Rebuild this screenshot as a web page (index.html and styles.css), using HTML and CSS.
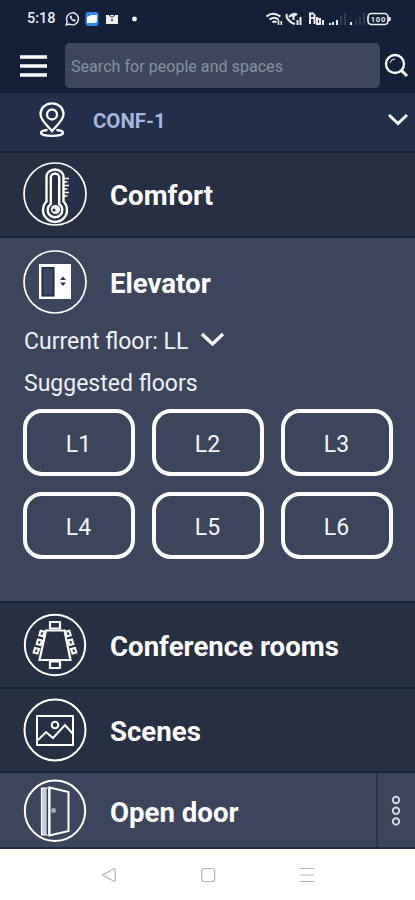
FILE: index.html
```html
<!DOCTYPE html>
<html lang="en">
<head>
<meta charset="utf-8">
<title>Building controls</title>
<link rel="stylesheet" href="styles.css">
</head>
<body>
<div class="phone">
  <header class="status">
    <span class="time">5:18</span>
    <svg class="status-left" width="76" height="16" viewBox="0 0 76 16">
      <path d="M1.200 14l1-3.400A6 6 0 1 1 4.500 13z" fill="none" stroke="#eee" stroke-width="1.400"/>
      <path d="M5 4.800c-1 2 2.200 6.300 5 5.600l.8-1.500-1.800-1-.9.800-1.700-1.800.7-.9-.8-1.600z" fill="#eee"/>
      <rect x="20.500" y="1" width="13" height="14" rx="3" fill="#3288e8"/>
      <path d="M22 7q0-2 2-2h1q0-1 2-1h5v5q0 3-3 3h-7z" fill="#fff"/>
      <path d="M41 4h12v9H41z" fill="#eee"/><path d="M44 4l3 2.500L50 4" fill="none" stroke="#182440"/><circle cx="47" cy="9" r="1" fill="#182440"/>
      <circle cx="69.500" cy="8" r="2.400" fill="#fff"/>
    </svg>
    <svg class="status-right" width="124" height="16" viewBox="0 0 124 16">
      <g fill="none" stroke="#eee" stroke-width="2">
        <path d="M-.5 5.500q6.500-5.500 14 0M2.500 8.500q4.500-3.500 9 0M5.500 11.500q2-2 4 0"/>
        <path d="M11.500 14V9m2.800 5v-4" stroke-width="1.600"/>
        <path d="M20 3c-2 3 3 9 8 10M22 6q5-5 8-2M26.500 9V3m0 0l-2 2m2-2l2 2"/>
        <path d="M30.500 14V9m3 5V6"/>
        <path d="M42 2.500h5M43 7h4M43 2v11M47.500 3v10M50 6v7h3V8h-3M56 14V9"/>
        <path d="M63 14v-2m3 2v-3m4 3V9"/>
        <path d="M74 14V5m4 9V2M89 14V9m4 5V6m4 8V2" stroke="#303d58"/>
        <path d="M84 14v-3"/>
        <rect x="101" y="2.500" width="20" height="11" rx="3.500" stroke-width="1.700"/>
        <path d="M122.700 6v4"/>
      </g>
      <text x="111.400" y="11" class="battery">100</text>
    </svg>
  </header>

  <div class="searchbar">
    <svg class="menu" width="27" height="22" viewBox="0 0 27 22"><path d="M0 2h27M0 11h27M0 20h27" stroke="#fff" stroke-width="3.600"/></svg>
    <div class="search">Search for people and spaces</div>
    <svg class="lens" width="26" height="26" viewBox="0 0 26 26"><g fill="none" stroke="#fff"><circle cx="10" cy="11" r="9" stroke-width="2.300"/><path d="M16.500 17.500l5.500 5.500" stroke-width="3"/><path d="M5 10q1-4 5-4" stroke-width="1"/></g></svg>
  </div>

  <div class="location">
    <svg class="pin" width="28" height="38" viewBox="0 0 28 38"><g fill="none" stroke="#fff" stroke-width="2.300"><path d="M14 29C12 26 2.500 19 2.500 12a11.500 10.700 0 0 1 23 0C25.500 19 16 26 14 29z"/><circle cx="14" cy="12.500" r="5"/><path d="M9.500 28q-6.500 .5-6.500 3c0 3.800 22 3.800 22 0q0-2.500-6.500-3"/></g></svg>
    <span class="room">CONF-1</span>
    <svg class="chev" width="22" height="14" viewBox="0 0 22 14"><path d="M2 2l9 8.500L20 2" fill="none" stroke="#fff" stroke-width="2.900"/></svg>
  </div>

  <section class="row comfort">
    <svg class="icon" width="64" height="64" viewBox="0 0 64 64"><g fill="none" stroke="#fff"><circle cx="32" cy="32" r="31" stroke-width="1.700"/><path d="M23.500 39.500V15a8.500 7.500 0 0 1 17 0v24.500a12 12 0 1 1-17 0z" stroke-width="2.400"/><path d="M27.800 42V15.500a4.200 4 0 0 1 8.400 0V42a7.300 7.300 0 1 1-8.400 0z" stroke-width="2.400"/><path d="M41 16.500h5M41 20h3.500M41 23.500h5M41 27h3.500M41 30.500h5M41 34h3.500" stroke-width="1.300"/></g><circle cx="32.500" cy="47.500" r="4.600" fill="#fff"/><circle cx="31" cy="48" r="1.600" fill="#272f43"/></svg>
    <h2>Comfort</h2>
  </section>

  <section class="elevator">
    <div class="elevator-head">
      <svg class="icon" width="64" height="64" viewBox="0 0 64 64"><circle cx="32" cy="32" r="31" fill="none" stroke="#fff" stroke-width="1.700"/><path fill="#fff" fill-rule="evenodd" d="M16 14h32v35H16zM18.500 17h13v29.500h-13z"/><path d="M19.500 18h11v27.500h-11z" fill="none" stroke="#1c2a4c" stroke-width="1.400"/><path d="M37 30l3-3.500 3 3.500zM37 32.500h6l-3 3.500z" fill="#26334f"/></svg>
      <h2>Elevator</h2>
    </div>
    <div class="current"><span>Current floor: LL</span><svg width="25" height="16" viewBox="0 0 25 16"><path d="M2 2l10.500 10L23 2" fill="none" stroke="#fff" stroke-width="3.300"/></svg></div>
    <div class="suggested">Suggested floors</div>
    <div class="floors">
      <button>L1</button><button>L2</button><button>L3</button>
      <button>L4</button><button>L5</button><button>L6</button>
    </div>
  </section>

  <section class="row conference">
    <svg class="icon" width="64" height="64" viewBox="0 0 64 64"><g fill="none" stroke="#fff" stroke-width="2.200"><circle cx="32" cy="32" r="30.200" stroke-width="2"/><path d="M23 17.500h18.500L47.500 47h-31z"/><path d="M27 9h10v6.500H27zM27 48.500h10V55H27z"/><path d="M17.700 17.700l4 1-1.600 4.500-3.700-1zM15 26.500l4 1-1.600 4.500-3.700-1zM12 35l4 1-1.600 4.500-3.700-1zM46.300 17.700l-4 1 1.600 4.500 3.700-1zM49 26.500l-4 1 1.600 4.500 3.700-1zM52 35l-4 1 1.600 4.500 3.700-1z"/></g></svg>
    <h2>Conference rooms</h2>
  </section>

  <section class="row scenes">
    <svg class="icon" width="64" height="64" viewBox="0 0 64 64"><g fill="none" stroke="#fff" stroke-width="2"><circle cx="32" cy="32" r="30.500"/><path d="M14 18h36v29H14z"/><circle cx="32" cy="27" r="3.300"/><path d="M15 42l8-8 7 6 12-13 8 9"/></g></svg>
    <h2>Scenes</h2>
  </section>

  <section class="row door">
    <svg class="icon" width="64" height="64" viewBox="0 0 64 64"><g fill="none" stroke="#fff"><circle cx="32" cy="32.800" r="30.200" stroke-width="2"/><path d="M18.500 10h8v47h-8z" fill="#c9cdd6" stroke-width="1.200"/><path d="M26.500 9.500L45.500 14v39l-19 4.500z" stroke-width="2"/></g><path d="M24.300 10.500v46" stroke="#1d2b4c" stroke-width="1.200"/><circle cx="30.500" cy="32.500" r="2.500" fill="#a2a7ae"/></svg>
    <h2>Open door</h2>
    <div class="more"><svg width="12" height="32" viewBox="0 0 12 32"><g fill="none" stroke="#d5dae4" stroke-width="1.900"><circle cx="6" cy="6" r="3.200"/><circle cx="6" cy="16.700" r="3.200"/><circle cx="6" cy="27.400" r="3.200"/></g></svg></div>
  </section>

  <nav class="nav">
    <svg width="16" height="16" viewBox="0 0 16 16"><path d="M1.500 8L13 1.800q1.200-.4 1.200 1v10.400q0 1.400-1.200 1z"/></svg>
    <svg width="16" height="16" viewBox="0 0 16 16"><rect x="1.700" y="1.500" width="13" height="13" rx="2.500"/></svg>
    <svg width="16" height="16" viewBox="0 0 16 16"><path d="M1 1.500h14M1 8h14M1 14.500h14"/></svg>
  </nav>
</div>
</body>
</html>
```
FILE: styles.css
```css
* { box-sizing: border-box; }
body { margin: 0; background: #fff; font-family: Roboto, "Liberation Sans", sans-serif; color: #fff; }
svg { display: block; flex: none; overflow: visible; }
.phone {
  width: 415px;
  height: 900px;
  display: grid;
  grid-template-rows: 38px 55px 60px 85px 365px 86px 84px 76px 51px;
  overflow: hidden;
}
.status { display: flex; align-items: center; padding: 0 25px 0 27px; background: #132038; }
.time { width: 38px; font-size: 14.5px; font-weight: 500; line-height: 38px; color: #eee; }
.status-right { margin-left: auto; }
.battery { font-size: 7.5px; font-weight: 700; fill: #eee; text-anchor: middle; letter-spacing: .8px; }
.searchbar { display: flex; align-items: center; padding: 0 4px 0 20px; background: #132038; }
.search {
  width: 315px; height: 45px; margin-left: 18px; padding-left: 6px; border-radius: 5px;
  background: #3d465c; color: #8790a3; font-size: 16.1px; line-height: 48px; white-space: nowrap;
}
.lens { margin-left: 5px; }
.location { display: flex; align-items: center; padding: 0 7px 4px 38px; background: #232e49; border-top: 1px solid #1b2742; border-bottom: 2px solid #19233b; }
.room { margin-left: 27px; font-size: 20.4px; font-weight: 700; color: #a4b8dd; }
.chev { margin: -2px 0 0 auto; }
.row { display: flex; align-items: center; padding-left: 23px; background: #272f43; border-bottom: 2px solid #18243c; }
h2 { margin: 4px 0 0 23px; font-size: 27.6px; font-weight: 700; line-height: 34px; white-space: nowrap; }
.comfort { padding-bottom: 2px; }
.elevator { background: #3c455c; border-bottom: 2px solid #18243c; padding: 12px 23px 0; }
.elevator-head { display: flex; align-items: center; }
.elevator-head h2 { margin-top: 3px; }
.current { display: flex; align-items: center; gap: 12px; height: 30px; margin-top: 12px; font-size: 23px; }
.current svg { margin-top: -3px; }
.suggested { height: 30px; margin-top: 13px; line-height: 30px; font-size: 23px; }
.current, .suggested { white-space: nowrap; color: #eef0f5; padding-left: 1px; }
.floors { display: grid; grid-template-columns: repeat(3, 112px); gap: 16px 17px; margin-top: 10px; }
.floors button {
  height: 67px; padding: 3px 1px 0 0; background: none; border: 4px solid #fff; border-radius: 19px;
  color: #f4f5f8; font: 400 23px Roboto, sans-serif;
}
.door { background: #3c455c; border-bottom-color: #1b2a4a; }
.door h2 { margin-top: 6px; }
.more { margin-left: auto; width: 40px; height: 100%; display: flex; align-items: center; justify-content: center; padding-right: 3px; border-left: 2px solid #2b354c; }
.nav { display: flex; align-items: center; justify-content: center; gap: 83px; background: #fff; }
.nav svg { fill: none; stroke: #b5b5b5; stroke-width: 1.2; }
```
